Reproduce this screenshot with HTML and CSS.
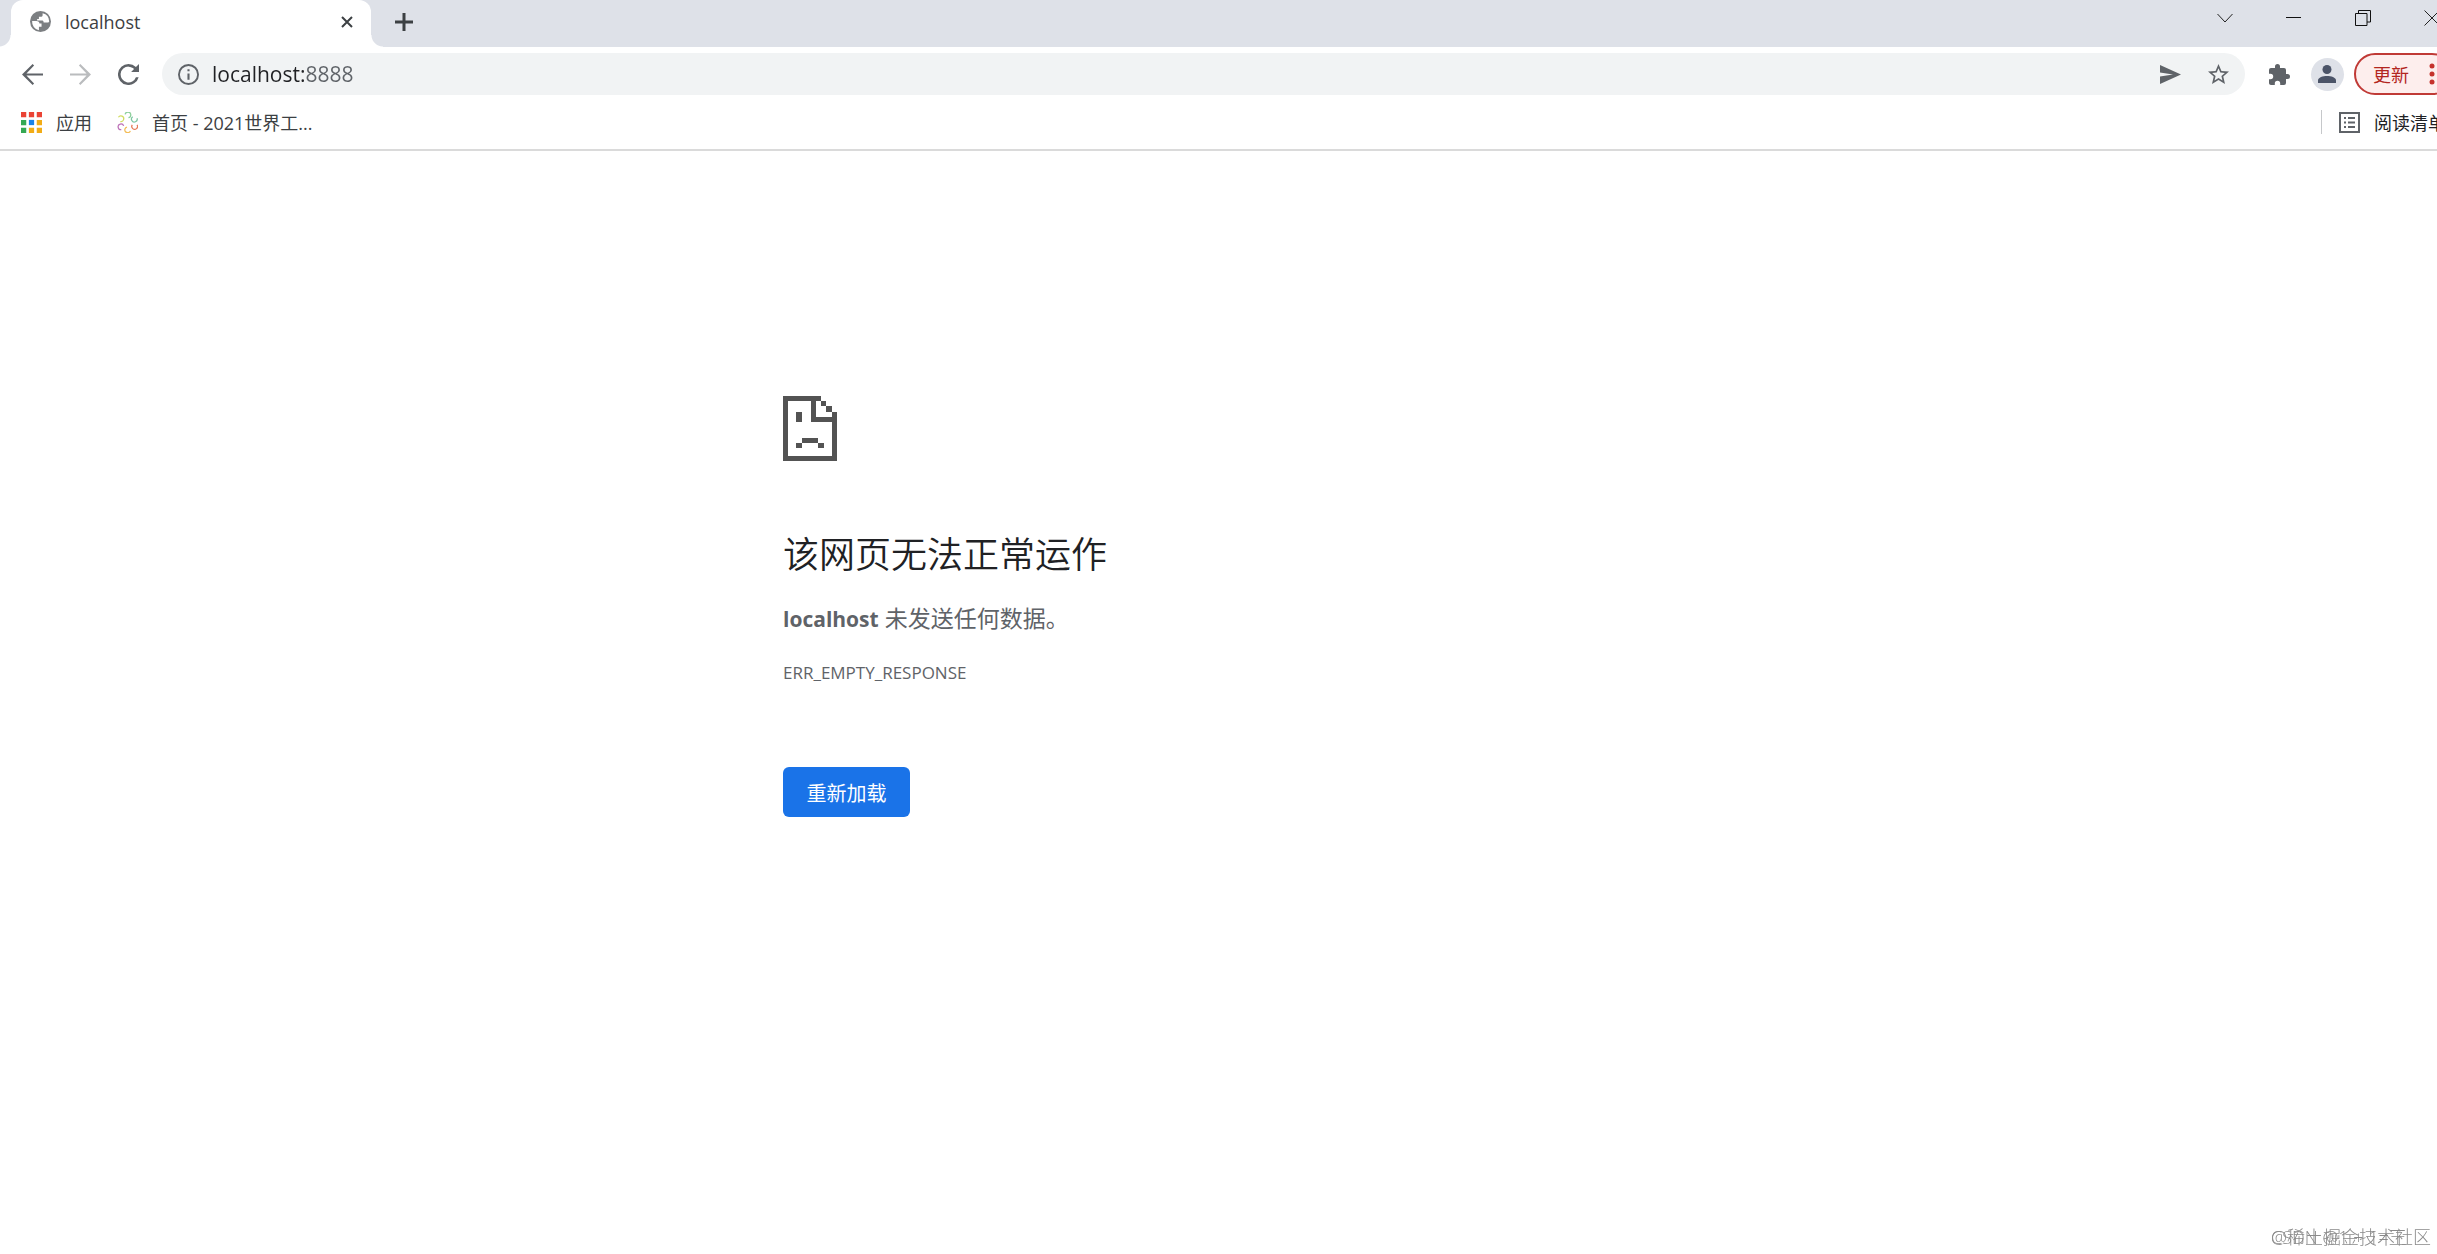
FILE: index.html
```html
<!DOCTYPE html>
<html lang="zh-CN">
<head>
    <meta charset="UTF-8">
    <meta name="viewport" content="width=device-width, initial-scale=1.0">
    <title>localhost</title>
    <link rel="stylesheet" href="styles.css">
</head>
<body>
    <div class="window">
        <header class="tab-strip">
            <div class="tab">
                <svg class="icon" viewBox="2 2 20 20" fill="#7c7f82"><circle cx="12" cy="12" r="10"/><path fill="#fff" d="M4 11.500h4c2 0 3 1 3 2.500h2v3h-2.500v3.300A8.300 8.300 0 0 1 4 11.500zM14 4.200V6c0 1-.8 1.500-2 1.500h-1.500V9.500H8.800v1.500H13c1.500 0 2 .6 2 2h4.500l.8-1A8.300 8.300 0 0 0 14 4.200z"/></svg>
                <span class="tab-title">localhost</span>
                <button class="tab-close" aria-label="关闭"><svg viewBox="0 0 12 12" width="12" height="12" stroke="#3c4043" stroke-width="2"><path d="M1 1l10 10M11 1L1 11"/></svg></button>
            </div>
            <button class="new-tab" aria-label="新标签页"><svg viewBox="0 0 18 18" width="18" height="18" stroke="#3c4043" stroke-width="3"><path d="M0 9h18M9 0v18"/></svg></button>
            <div class="window-controls">
                <button aria-label="搜索标签页"><svg viewBox="0 0 16 16" width="16" height="16" fill="none" stroke="#222"><path d="M.5 4l7.500 8 7.500-8"/></svg></button>
                <button aria-label="最小化"><svg viewBox="0 0 16 16" width="16" height="16" fill="#111"><path d="M0 7h15v1H0z"/></svg></button>
                <button aria-label="还原"><svg viewBox="0 0 16 16" width="16" height="16" fill="none" stroke="#111"><path d="M.5 3.500h11.500v12H.5zM3.500 3.500V.5h12v11.500h-3.500"/></svg></button>
                <button aria-label="关闭窗口"><svg viewBox="0 0 16 16" width="16" height="16" fill="none" stroke="#222"><path d="M.5.5l15 15M15.500.5l-15 15"/></svg></button>
            </div>
        </header>

        <nav class="toolbar">
            <button class="tool" aria-label="后退"><svg class="icon" viewBox="4 4 16 16" fill="#5f6368"><path d="M20 11.200H7.400l5.800-6.100L12.100 4 4 12l8.100 8 1.100-1.100-5.800-6.100H20z"/></svg></button>
            <button class="tool" aria-label="前进"><svg class="icon" viewBox="4 4 16 16" fill="#babcbe"><path d="M4 11.200h12.600l-5.800-6.100L11.900 4 20 12l-8.100 8-1.100-1.100 5.800-6.100H4z"/></svg></button>
            <button class="tool" aria-label="重新加载此页"><svg class="icon" viewBox="4 4 16 16" fill="#5f6368"><path d="M17.650 6.350A7.960 7.960 0 0 0 12 4a8 8 0 1 0 7.730 10h-2.080A6 6 0 1 1 12 6c1.660 0 3.140.69 4.220 1.780L14 10h6V4z"/></svg></button>
            <div class="omnibox">
                <svg class="icon" viewBox="2 2 20 20" fill="#5f6368"><path d="M11 7h2v2h-2zm0 4h2v6h-2zm1-9a10 10 0 1 0 0 20 10 10 0 0 0 0-20zm0 18.200a8.200 8.200 0 1 1 0-16.400 8.200 8.200 0 0 1 0 16.400z"/></svg>
                <input class="url" type="text" value="localhost:8888" aria-label="地址和搜索栏">
                <button class="omni-btn" aria-label="分享此页"><svg class="icon" viewBox="0 0 21 21" fill="#5f6368"><path d="M0 1v7.500l13 2L0 12.500V20l21-9.500z"/></svg></button>
                <button class="omni-btn" aria-label="添加书签"><svg class="icon" viewBox="2 2 20 20" fill="#5f6368"><path d="M22 9.240l-7.190-.62L12 2 9.190 8.630 2 9.240l5.460 4.730L5.820 21 12 17.270 18.180 21l-1.630-7.030zM12 15.400l-3.760 2.270 1-4.280-3.320-2.880 4.380-.38L12 6.100l1.710 4.040 4.380.38-3.320 2.880 1 4.280z"/></svg></button>
            </div>
            <button class="tool" aria-label="扩展程序"><svg class="icon" viewBox="2 1 21 21" fill="#5f6368"><path d="M20.500 11H19V7a2 2 0 0 0-2-2h-4V3.500a2.500 2.500 0 0 0-5 0V5H4a2 2 0 0 0-2 2v3.800h1.500a2.700 2.700 0 0 1 0 5.400H2V20c0 1.100.9 2 2 2h3.800v-1.500a2.700 2.700 0 0 1 5.400 0V22H17a2 2 0 0 0 2-2v-4h1.500a2.500 2.500 0 0 0 0-5z"/></svg></button>
            <button class="tool" aria-label="用户"><span class="avatar"><svg viewBox="0 0 18 18" width="18" height="18" fill="#4b5468"><circle cx="9" cy="4.500" r="4.500"/><path d="M0 18v-2.500C0 12.200 5 11 9 11s9 1.200 9 4.500V18z"/></svg></span></button>
            <button class="update">更新<svg viewBox="0 0 6 22" width="6" height="22" fill="#c5322c"><circle cx="3" cy="3" r="2.500"/><circle cx="3" cy="11" r="2.500"/><circle cx="3" cy="19" r="2.500"/></svg></button>
        </nav>

        <nav class="bookmarks">
            <a class="bookmark" href="#">
                <svg class="icon" viewBox="0 0 20 20"><path fill="#ea4335" d="M0 0h5v5H0zM7.500 0h5v5h-5zM15 0h5v5h-5z"/><path fill="#34a853" d="M0 7.500h5v5H0zM0 15h5v5H0z"/><path fill="#1a82e8" d="M7.500 7.500h5v5h-5z"/><path fill="#f2ac16" d="M15 7.500h5v5h-5zM7.500 15h5v5h-5zM15 15h5v5h-5z"/></svg>
                应用
            </a>
            <a class="bookmark" href="#">
                <svg class="icon" viewBox="0 0 22 22" fill="none" stroke-width="1.300"><path stroke="#8ccf9b" d="M8.500 2.500a3 3 0 1 1 3.500 3.500"/><path stroke="#7bc6a0" d="M16.500 5a3 3 0 1 0 4.500 1.500"/><path stroke="#e77b55" d="M16 13.500a3 3 0 1 0 5 0"/><path stroke="#f3bd58" d="M10.500 15.800a3 3 0 1 0 3.500 4"/><path stroke="#bd72b8" d="M4.500 18.500a3 3 0 1 1 2.500-4"/><path stroke="#d0dc60" d="M1.500 5.500a3 3 0 1 1 2 4.500"/></svg>
                首页 - 2021世界工...
            </a>
            <a class="bookmark reading-list" href="#">
                <svg class="icon" viewBox="0 0 21 21" fill="#5f6368"><path fill-rule="evenodd" d="M0 0h21v21H0zM2 2v17h17V2z"/><path d="M5 5h2v2H5zM9 5h7v2H9zM5 9.500h2v2H5zM9 9.500h7v2H9zM5 14h2v2H5zM9 14h7v2H9z"/></svg>
                阅读清单
            </a>
        </nav>

        <main class="error-page">
            <svg class="sad-page" viewBox="0 0 54 65" fill="#535353" shape-rendering="crispEdges"><path d="M0 0h38v5H5v55h44V26H28V5h5v16h16v-5h5v49H0zM38 5h5v5h-5zM43 10h6v6h-6zM13 16h6v10h-6zM19 42h16v5H19zM13 47h6v5h-6zM35 47h6v5h-6z"/></svg>
            <h1>该网页无法正常运作</h1>
            <p class="summary"><strong>localhost</strong> 未发送任何数据。</p>
            <div class="error-code">ERR_EMPTY_RESPONSE</div>
            <button class="reload">重新加载</button>
        </main>
    </div>
    <div class="watermark">
        <span>CSDN @1 + 1=王</span>
        <span>@稀土掘金技术社区</span>
    </div>
</body>
</html>
```
FILE: styles.css
```css
body {
    margin: 0;
    min-height: 100vh;
    overflow: hidden;
    background: #fff;
    color: #3c4043;
    font-family: "Open Sans", "Noto Sans CJK SC", sans-serif;
    font-size: 18px;
}

button {
    display: flex;
    align-items: center;
    justify-content: center;
    padding: 0;
    border: none;
    background: none;
    font-family: inherit;
    cursor: pointer;
}

/* the window runs a little past the right edge of the screen */
.window {
    margin-right: -29px;
}

.icon {
    display: block;
    flex: none;
    width: 21px;
    height: 21px;
}

/* tabs */
.tab-strip {
    display: flex;
    height: 47px;
    padding-left: 11px;
    background: #dee1e8;
}

.tab {
    position: relative;
    display: flex;
    align-items: center;
    box-sizing: border-box;
    width: 360px;
    padding: 0 18px 4px 19px;
    border-radius: 12px 12px 0 0;
    background: #fff;
}

.tab::before,
.tab::after {
    content: "";
    position: absolute;
    bottom: 0;
    width: 12px;
    height: 12px;
}

.tab::before {
    right: 100%;
    background: radial-gradient(circle at 0 0, transparent 11px, #fff 12px);
}

.tab::after {
    left: 100%;
    background: radial-gradient(circle at 100% 0, transparent 11px, #fff 12px);
}

.tab-title {
    flex: 1;
    margin-left: 14px;
}

.new-tab {
    width: 42px;
    margin: 0 0 4px 12px;
}

.window-controls {
    display: flex;
    margin-left: auto;
}

.window-controls button {
    width: 69px;
    height: 35px;
}

/* toolbar */
.toolbar {
    display: flex;
    align-items: center;
    height: 54px;
    padding: 0 13px 0 8px;
}

.tool {
    flex: none;
    width: 48px;
    height: 42px;
}

.omnibox {
    display: flex;
    flex: 1;
    align-items: center;
    height: 42px;
    margin: 0 10px;
    padding: 0 3px 0 16px;
    border-radius: 21px;
    background: #f1f3f4;
}

.url {
    flex: 1;
    margin-left: 13px;
    padding: 0;
    border: none;
    outline: none;
    background: linear-gradient(90deg, #202124 94px, #5f6368 94px);
    -webkit-background-clip: text;
    background-clip: text;
    color: transparent;
    font-family: inherit;
    font-size: 21px;
}

.omni-btn {
    width: 48px;
    height: 42px;
}

.avatar {
    display: flex;
    align-items: center;
    justify-content: center;
    width: 33px;
    height: 33px;
    border-radius: 50%;
    background: #dee1e8;
}

.update {
    flex: none;
    justify-content: space-between;
    box-sizing: border-box;
    width: 99px;
    height: 42px;
    margin-left: 3px;
    padding: 0 16px 0 17px;
    border: 2px solid #c03a36;
    border-radius: 21px;
    background: #fdeeed;
    color: #b3261e;
    font-size: 18px;
}

/* bookmarks */
.bookmarks {
    display: flex;
    align-items: center;
    gap: 25px;
    height: 48px;
    padding: 0 20px 0 21px;
    border-bottom: 2px solid #dadada;
}

.bookmark {
    display: flex;
    align-items: center;
    gap: 14px;
    height: 24px;
    margin-bottom: 6px;
    color: #3c4043;
    text-decoration: none;
    white-space: nowrap;
}

.reading-list {
    margin-left: auto;
    padding-left: 17px;
    border-left: 1px solid #c6c8ca;
    color: #202124;
}

/* error page */
.error-page {
    max-width: 900px;
    margin: 0 auto;
    padding-top: 245px;
    color: #5f6368;
}

.sad-page {
    display: block;
    width: 54px;
    height: 65px;
}

h1 {
    margin: 67px 0 18px;
    color: #202124;
    font-size: 36px;
    font-weight: 350;
    line-height: 54px;
}

.summary {
    margin: 0;
    font-size: 23px;
    line-height: 36px;
}

.summary strong {
    font-size: 21px;
}

.error-code {
    margin-top: 18px;
    font-size: 17px;
    line-height: 36px;
}

.reload {
    width: 127px;
    height: 50px;
    margin-top: 76px;
    border-radius: 6px;
    background: #1a73e8;
    color: #fff;
    font-size: 20px;
}

/* two stamps printed over each other */
.watermark {
    position: fixed;
    right: 6px;
    bottom: 4px;
    display: grid;
    color: #8a8a8a;
    font-size: 18px;
    font-weight: 300;
    line-height: 26px;
}

.watermark span {
    grid-area: 1 / 1;
}
```
